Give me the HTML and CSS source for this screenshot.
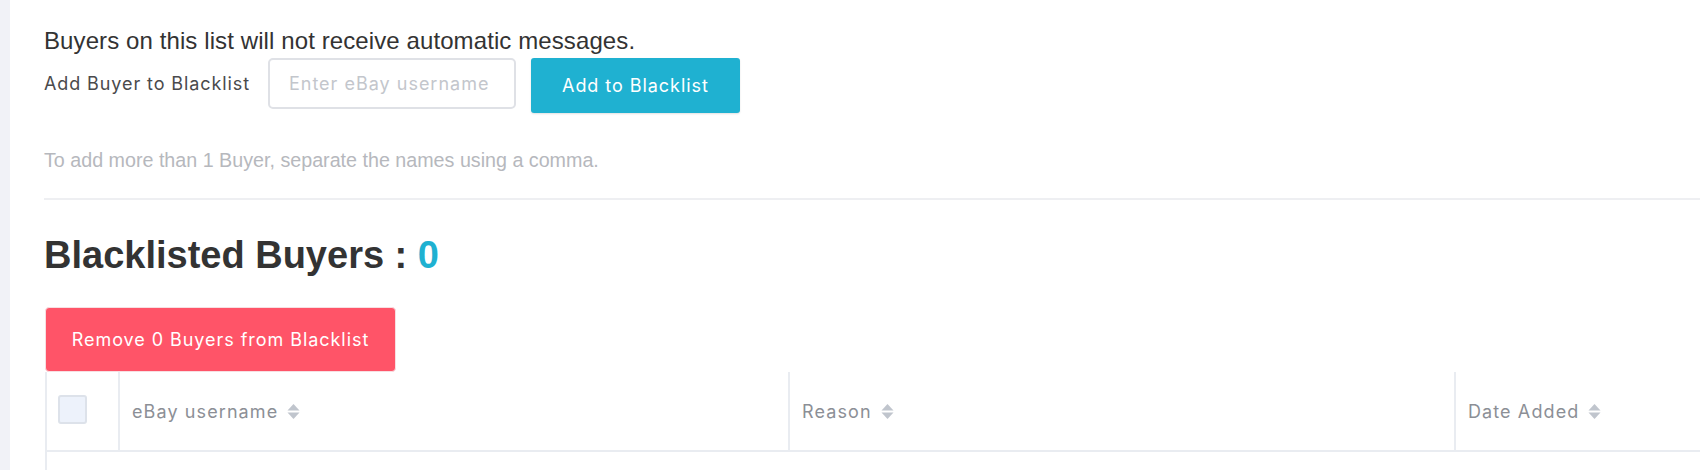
FILE: index.html
```html
<!DOCTYPE html>
<html lang="en">
<head>
<meta charset="utf-8">
<title>Blacklist</title>
<link rel="stylesheet" href="styles.css">
</head>
<body>
<div class="layout">
  <aside class="sidebar-edge"></aside>
  <main class="content">
    <p class="intro">Buyers on this list will not receive automatic messages.</p>
    <form class="add-row" onsubmit="return false">
      <label class="add-label" for="buyer">Add Buyer to Blacklist</label>
      <input class="add-input" id="buyer" type="text" placeholder="Enter eBay username">
      <button class="btn btn-primary" type="button">Add to Blacklist</button>
    </form>
    <p class="hint">To add more than 1 Buyer, separate the names using a comma.</p>
    <hr class="divider">
    <h2 class="title">Blacklisted Buyers : <span class="count">0</span></h2>
    <button class="btn btn-danger" type="button">Remove 0 Buyers from Blacklist</button>
    <div class="table">
      <div class="thead">
        <div class="th th-check"><span class="checkbox"></span></div>
        <div class="th">eBay username <svg class="sort" viewBox="0 0 13 17" width="13" height="17"><polygon points="0.5,7.5 6.5,1 12.5,7.5"/><polygon points="0.5,9.5 6.5,16 12.5,9.5"/></svg></div>
        <div class="th">Reason <svg class="sort" viewBox="0 0 13 17" width="13" height="17"><polygon points="0.5,7.5 6.5,1 12.5,7.5"/><polygon points="0.5,9.5 6.5,16 12.5,9.5"/></svg></div>
        <div class="th">Date Added <svg class="sort" viewBox="0 0 13 17" width="13" height="17"><polygon points="0.5,7.5 6.5,1 12.5,7.5"/><polygon points="0.5,9.5 6.5,16 12.5,9.5"/></svg></div>
      </div>
      <div class="tbody"></div>
    </div>
  </main>
</div>
</body>
</html>
```

FILE: styles.css
```css
html, body {
  margin: 0;
  padding: 0;
  background: #ffffff;
  height: 100%;
  overflow: hidden;
}

.layout {
  display: flex;
  min-height: 470px;
}

.sidebar-edge {
  flex: 0 0 10px;
  background: #f1f2f7;
}

.content {
  flex: 1;
  padding-left: 34px;
  padding-top: 27px;
  min-width: 0;
}

.intro {
  margin: 0;
  font-family: "Liberation Sans", Arial, sans-serif;
  font-size: 24px;
  letter-spacing: 0.1px;
  line-height: 28px;
  color: #333333;
}

.add-row {
  display: flex;
  align-items: flex-start;
  margin-top: 3px;
}

.add-label {
  font-family: Inter, "Noto Sans", sans-serif;
  font-size: 18px;
  letter-spacing: 0.9px;
  line-height: 51px;
  color: #4a4a4c;
  margin-right: 18px;
}

.add-input {
  box-sizing: border-box;
  width: 248px;
  height: 51px;
  border: 2px solid #dfe1e6;
  border-radius: 5px;
  padding: 0 0 0 19px;
  font-family: Inter, "Noto Sans", sans-serif;
  font-size: 18px;
  letter-spacing: 1px;
  color: #333;
  outline: none;
  margin-right: 15px;
}

.add-input::placeholder {
  color: #c3c6cc;
}

.btn {
  box-sizing: border-box;
  border: 0;
  border-radius: 3px;
  font-family: Inter, "Noto Sans", sans-serif;
  font-size: 18px;
  letter-spacing: 0.95px;
  color: #ffffff;
  cursor: pointer;
  padding: 0;
}

.btn-primary {
  width: 209px;
  height: 55px;
  background: #1fb1d1;
  box-shadow: 0 1px 2px rgba(0, 0, 0, 0.12);
}

.hint {
  margin: 35px 0 0;
  font-family: "Liberation Sans", Arial, sans-serif;
  font-size: 19.7px;
  line-height: 24px;
  color: #b6b8bd;
}

.divider {
  margin: 26px 0 0;
  border: 0;
  height: 2px;
  background: #eeeff2;
}

.title {
  margin: 36px 0 0;
  font-family: "Liberation Sans", Arial, sans-serif;
  font-weight: bold;
  font-size: 38px;
  line-height: 38px;
  color: #333333;
}

.count {
  color: #1fb1d1;
}

.btn-danger {
  display: block;
  margin: 33px 0 0 1px;
  width: 351px;
  height: 65px;
  background: #ff5468;
  border: 1px solid #f7dfe2;
  border-radius: 4px;
}

.table {
  border-left: 2px solid #e9ecf1;
  margin-left: 1px;
}

.thead {
  display: grid;
  grid-template-columns: 71px 670px 666px 1fr;
  height: 78px;
  border-bottom: 2px solid #e9ecf1;
}

.th {
  display: flex;
  align-items: center;
  gap: 9px;
  padding-left: 12px;
  border-left: 2px solid #e9ecf1;
  font-family: Inter, "Noto Sans", sans-serif;
  font-size: 18px;
  letter-spacing: 1.1px;
  color: #8c8f96;
  white-space: nowrap;
}

.th-check {
  border-left: 0;
  padding-left: 11px;
  padding-bottom: 4px;
}

.checkbox {
  box-sizing: border-box;
  display: block;
  width: 29px;
  height: 29px;
  border: 2px solid #dde2ea;
  border-radius: 3px;
  background: #edf2fb;
}

.sort {
  fill: #c0c5cd;
  flex: 0 0 auto;
}

.tbody {
  height: 40px;
}
```
